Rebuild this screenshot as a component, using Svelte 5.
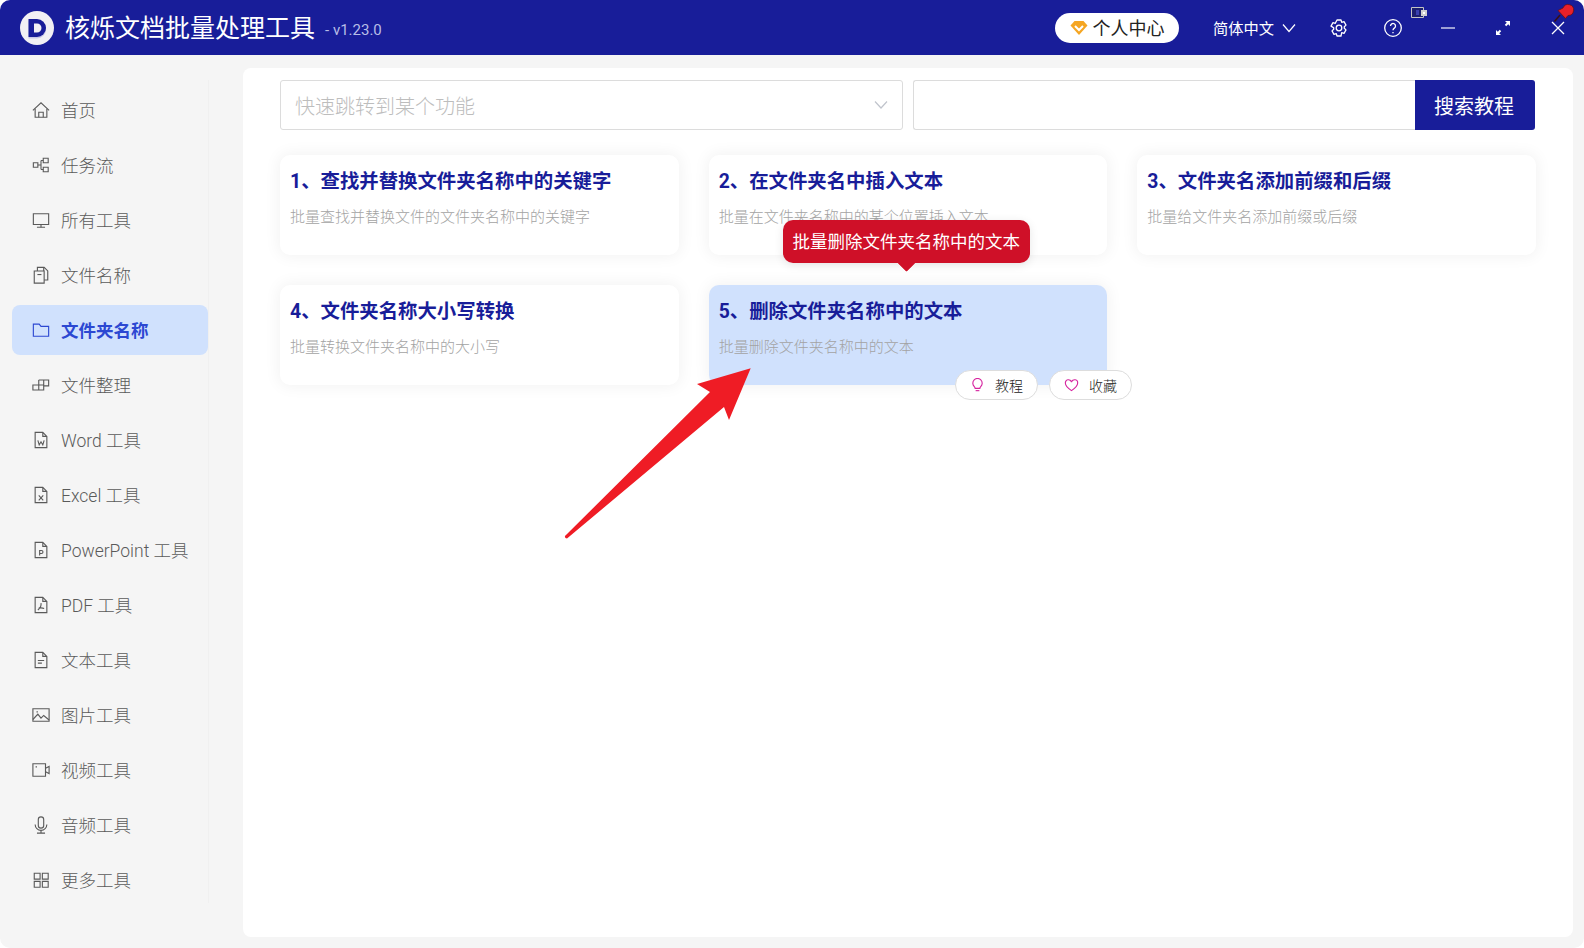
<script>
  // sidebar entries, icon is a list of stroked paths on a 20x20 box
  const doc = "M3.500 1.500h8.500l4.500 4.500v12.500h-13z M12 1.500V6h4.500";
  const navItems = [
    { label: "首页", icon: ["M1 10.500 10 2l9 8.500", "M3.500 8.500V18h13V8.500", "M7.500 18v-5.500h5V18"] },
    { label: "任务流", icon: ["M1.500 7.500h5v5h-5z", "M12.500 2.500h5.500v5h-5.500z", "M12.500 12.500h5.500v5h-5.500z", "M6.500 10h3.500M10 5v10M10 5h2.500M10 15h2.500"] },
    { label: "所有工具", icon: ["M1.500 3h17v12h-17z", "M10 15v3", "M5.500 18h9"] },
    { label: "文件名称", icon: ["M2.500 5.500h11v13.500h-11z", "M6 5.500V1.500h7.500l4 4V15.500h-4", "M13 1.500v4", "M6 9.500h4.500"] },
    { label: "文件夹名称", icon: ["M1.500 3.500h6.500l2 2.500h8.500v11h-17z"] },
    { label: "文件整理", icon: ["M7.500 4.500h11V11H13", "M13 4.500V15.500H1V10h12", "M7.500 4.500V15.500"] },
    { label: "Word 工具", icon: [doc, "M6.500 10.500l1.500 5 2-3.500 2 3.500 1.500-5"] },
    { label: "Excel 工具", icon: [doc, "M7.500 10.500l5 5.500M12.500 10.500l-5 5.500"] },
    { label: "PowerPoint 工具", icon: [doc, "M8.500 16v-5.500h2a1.700 1.700 0 0 1 0 3.400h-2"] },
    { label: "PDF 工具", icon: [doc, "M10 8c.500 3-1.500 6-3.500 7.500M7.500 13.500c2-.5 4-.5 6 .5"] },
    { label: "文本工具", icon: [doc, "M6.500 10.500h7M6.500 13.500h4.500"] },
    { label: "图片工具", icon: ["M1 3h18v14H1z", "M1 15l5.500-6 3.500 4.500 3-3 6 5", "M5 6.500h1.500"] },
    { label: "视频工具", icon: ["M1 3h14v14H1z", "M15 8l4-2v8l-4-2", "M4 6.500h1.500"] },
    { label: "音频工具", icon: ["M7 4a3 3 0 0 1 6 0v6.500a3 3 0 0 1-6 0z", "M3.500 9.500a6.500 6.500 0 0 0 13 0", "M10 16v3M5.500 19h9"] },
    { label: "更多工具", icon: ["M2.500 2.500H9V9H2.500z", "M11.500 2.500H18V9h-6.500z", "M2.500 11.500H9V18H2.500z", "M11.500 11.500H18V18h-6.500z"] },
  ];
  const activeNav = "文件夹名称";

  const cards = [
    { title: "1、查找并替换文件夹名称中的关键字", desc: "批量查找并替换文件的文件夹名称中的关键字" },
    { title: "2、在文件夹名中插入文本", desc: "批量在文件夹名称中的某个位置插入文本" },
    { title: "3、文件夹名添加前缀和后缀", desc: "批量给文件夹名添加前缀或后缀" },
    { title: "4、文件夹名称大小写转换", desc: "批量转换文件夹名称中的大小写" },
    { title: "5、删除文件夹名称中的文本", desc: "批量删除文件夹名称中的文本", hover: true },
  ];
</script>

<div class="window">
  <header>
    <div class="logo">
      <svg viewBox="0 0 34 34" width="34" height="34">
        <circle cx="17" cy="17" r="17" fill="#f1f0f4" />
        <path d="M8.500 8h8.500a9 9 0 0 1 0 18H8.500z" fill="#c9c8e6" transform="translate(0 1.500)" />
        <path d="M8.500 8h8.500a9 9 0 0 1 0 18H8.500z" fill="#181d99" />
        <path d="M14 12.500h3a4.500 4.500 0 0 1 0 9h-3z" fill="#f1f0f4" />
      </svg>
    </div>
    <span class="app-name">核烁文档批量处理工具</span>
    <span class="version">- v1.23.0</span>

    <div class="actions">
      <div class="user-pill">
        <svg viewBox="0 0 18 16" width="18" height="16">
          <path d="M4.500 1h9L17.500 5.500 9 15 .5 5.500z" fill="#f5a623" />
          <path d="M5 6l4 4 4-4" fill="none" stroke="#fff" stroke-width="2" />
        </svg>
        <span>个人中心</span>
      </div>
      <div class="lang">
        <span>简体中文</span>
        <svg viewBox="0 0 14 10" width="14" height="10"><path d="M1 1.500 7 8.500l6-7" fill="none" stroke="#fff" stroke-width="1.200" /></svg>
      </div>
      <svg class="gear" viewBox="0 0 20 20" width="20" height="20" fill="none" stroke="#fff" stroke-width="1.300">
        <path d="M8 2h4l.7 2.300 2.300-.6 2 3.400-1.700 1.700v1.400l1.700 1.700-2 3.400-2.300-.6L12 18H8l-.7-2.300-2.300.6-2-3.400 1.700-1.700V9.800L2 8.100l2-3.400 2.300.6z" stroke-linejoin="round" />
        <circle cx="10" cy="10" r="2.800" />
      </svg>
      <svg class="help" viewBox="0 0 20 20" width="20" height="20" fill="none" stroke="#fff" stroke-width="1.300">
        <circle cx="10" cy="10" r="8.300" />
        <path d="M7.500 8a2.500 2.500 0 1 1 3.800 2.100c-.9.6-1.300 1-1.300 2.100" />
        <path d="M10 14v1.200" />
      </svg>
      <svg class="win-btn min" viewBox="0 0 16 16" width="16" height="16"><path d="M1 8h14" stroke="#e6e6f4" stroke-width="1.300" /></svg>
      <svg class="win-btn max" viewBox="0 0 16 16" width="16" height="16" fill="#fff">
        <path d="M15 1v5l-1.800-1.800-2 2-1.400-1.400 2-2L10 1z" />
        <path d="M1 15v-5l1.800 1.800 2-2 1.400 1.400-2 2L6 15z" />
      </svg>
      <svg class="win-btn close" viewBox="0 0 16 16" width="16" height="16"><path d="M2 2l12 12M14 2 2 14" stroke="#fff" stroke-width="1.300" /></svg>
    </div>

    <svg class="tray" viewBox="0 0 16 12" width="16" height="12">
      <path d="M.5 .5h12v10H.5z" fill="#1c1f70" stroke="#c4c4c4" />
      <path d="M5 3h3v5H5z" fill="#3a40b0" />
      <path d="M10 3h6v6h-6z" fill="#cfcfcf" />
      <path d="M12 5h2v2h-2z" fill="#fff" />
    </svg>
    <svg class="pin" viewBox="0 0 22 22" width="22" height="22">
      <path d="M1.500 20.500 7 14" stroke="#3a1014" stroke-width="1.600" />
      <path d="M5 9.500l5-2.500a5.500 5.500 0 1 1 5 7.500l-2.500 3z" fill="#e8202a" stroke="#6a1015" stroke-width=".8" />
    </svg>
  </header>

  <div class="body">
    <aside>
      <nav>
        {#each navItems as item}
          <div class="nav-item" class:active={item.label === activeNav}>
            <svg viewBox="0 0 20 20" width="18" height="18" fill="none" stroke="currentColor" stroke-width="1.250">
              {#each item.icon as d}<path {d} />{/each}
            </svg>
            <span>{item.label}</span>
          </div>
        {/each}
      </nav>
    </aside>

    <main>
      <div class="search-row">
        <div class="select">
          <span>快速跳转到某个功能</span>
          <svg viewBox="0 0 14 10" width="14" height="10"><path d="M1 1.500 7 8l6-6.500" fill="none" stroke="#c0c4cc" stroke-width="1.200" /></svg>
        </div>
        <div class="search">
          <div class="search-input"></div>
          <div class="search-btn">搜索教程</div>
        </div>
      </div>

      <div class="grid">
        {#each cards as card}
          <div class="card" class:hover={card.hover}>
            <h3>{card.title}</h3>
            <p>{card.desc}</p>
            {#if card.hover}
              <div class="tooltip">批量删除文件夹名称中的文本</div>
              <div class="card-btns">
                <div class="pill-btn">
                  <svg viewBox="0 0 16 16" width="15" height="15" fill="none" stroke="#d6249f" stroke-width="1.200">
                    <path d="M5.500 11c0-1.500-2.500-2.500-2.500-5.500a5 5 0 0 1 10 0c0 3-2.500 4-2.500 5.500z" />
                    <path d="M6 13.500h4" />
                  </svg>
                  <span>教程</span>
                </div>
                <div class="pill-btn">
                  <svg viewBox="0 0 16 16" width="15" height="15" fill="none" stroke="#d6249f" stroke-width="1.200">
                    <path d="M8 13.500C4 10.500 1.500 8.500 1.500 5.800A3.300 3.300 0 0 1 8 4.500a3.300 3.300 0 0 1 6.500 1.300c0 2.700-2.500 4.700-6.500 7.700z" />
                  </svg>
                  <span>收藏</span>
                </div>
              </div>
            {/if}
          </div>
        {/each}
      </div>
    </main>
  </div>

  <!-- red annotation arrow drawn over the screenshot -->
  <svg class="arrow" viewBox="0 0 200 180" width="200" height="180">
    <path d="M190.700 3.300 137 19l13 8L5 171q-.5 2 2 2.500L164 42l5 13z" fill="#ef1c25" />
  </svg>
</div>

<style>
  :global(body) {
    margin: 0;
    background: #fff;
    font-family: Roboto, "Noto Sans CJK SC", sans-serif;
  }
  .window {
    position: relative;
    width: 1584px;
    height: 948px;
    display: flex;
    flex-direction: column;
    background: #f5f5f5;
    border-radius: 10px;
    overflow: hidden;
  }

  /* title bar */
  header {
    position: relative;
    height: 55px;
    flex-shrink: 0;
    display: flex;
    align-items: center;
    background: #181d99;
    padding-left: 20px;
    color: #fff;
  }
  .logo {
    width: 34px;
    height: 34px;
    margin-right: 11px;
    display: flex;
  }
  .app-name {
    font-size: 25px;
    line-height: 34px;
    padding-top: 2px;
  }
  .version {
    margin-left: 10px;
    font-size: 15px;
    color: #b7bde6;
    margin-top: 5px;
  }
  .actions {
    margin-left: auto;
    display: flex;
    align-items: center;
    height: 100%;
  }
  .user-pill {
    width: 124px;
    height: 30px;
    box-sizing: border-box;
    background: #fff;
    border-radius: 15px;
    display: flex;
    align-items: center;
    justify-content: center;
    gap: 5px;
    color: #222;
    font-size: 18px;
  }
  .user-pill span {
    margin-top: -2px;
  }
  .lang {
    display: flex;
    align-items: center;
    gap: 8px;
    margin-left: 34px;
    font-size: 15.250px;
  }
  .lang span {
    margin-top: -2px;
  }
  .gear { margin-left: 33px; }
  .help { margin-left: 34px; }
  .win-btn.min { margin-left: 37px; }
  .win-btn.max { margin-left: 39px; }
  .win-btn.close { margin-left: 39px; margin-right: 18px; }
  .tray {
    position: absolute;
    left: 1411px;
    top: 7px;
  }
  .pin {
    position: absolute;
    left: 1553px;
    top: 1px;
  }

  .body {
    flex: 1;
    display: flex;
    min-height: 0;
  }

  /* sidebar */
  aside {
    width: 243px;
    flex-shrink: 0;
    padding-top: 25px;
    box-sizing: border-box;
  }
  nav {
    width: 197px;
    margin-left: 12px;
    padding-top: 5px;
    border-right: 1px solid #f0f0f0;
    height: 823px;
    box-sizing: border-box;
    display: flex;
    flex-direction: column;
    gap: 5px;
  }
  .nav-item {
    width: 196px;
    height: 50px;
    flex-shrink: 0;
    display: flex;
    align-items: center;
    gap: 11px;
    padding-left: 20px;
    box-sizing: border-box;
    border-radius: 8px;
    font-size: 17.500px;
    font-weight: 300;
    color: #5a5a5a;
  }
  .nav-item span {
    margin-top: -2px;
  }
  .nav-item.active {
    background: #d0e1fd;
    color: #2c48d2;
    font-weight: 700;
  }

  /* main panel */
  main {
    flex: 1;
    background: #fff;
    margin: 13px 11px 11px 0;
    border-radius: 8px;
    padding: 12px 37px 0;
    min-width: 0;
  }
  .search-row {
    display: flex;
    gap: 10px;
    height: 50px;
    margin-right: 1px;
  }
  .select {
    flex: 0 0 623px;
    box-sizing: border-box;
    border: 1px solid #dcdcdc;
    border-radius: 3px;
    display: flex;
    align-items: center;
    justify-content: space-between;
    padding: 0 14px;
    font-size: 20px;
    font-weight: 300;
    color: #bdbdbd;
  }
  .search {
    flex: 1;
    display: flex;
  }
  .search-input {
    flex: 1;
    border: 1px solid #dcdcdc;
    border-right: 0;
    border-radius: 3px 0 0 3px;
  }
  .search-btn {
    width: 120px;
    padding-right: 2px;
    box-sizing: border-box;
    background: #181d99;
    color: #fff;
    font-size: 20px;
    display: flex;
    align-items: center;
    justify-content: center;
    border-radius: 0 3px 3px 0;
  }

  .grid {
    margin-top: 25px;
    display: grid;
    grid-template-columns: repeat(3, 1fr);
    gap: 30px;
  }
  .card {
    position: relative;
    height: 100px;
    box-sizing: border-box;
    padding: 13px 10px 0;
    background: #fff;
    border-radius: 10px;
    box-shadow: 0 0 15px 2px rgba(0, 0, 0, 0.05);
  }
  .card.hover {
    background: #d0e1fd;
  }
  h3 {
    margin: 0;
    font-size: 19.400px;
    line-height: 28px;
    font-weight: 700;
    color: #181d99;
  }
  p {
    margin: 10px 0 0;
    font-size: 15px;
    line-height: 22px;
    font-weight: 300;
    color: #a3a3a3;
  }
  .tooltip {
    position: absolute;
    left: 74px;
    top: -65px;
    width: 247px;
    height: 43px;
    box-sizing: border-box;
    padding-top: 1px;
    background: #cf1028;
    border-radius: 10px;
    color: #fff;
    font-size: 17.500px;
    line-height: 43px;
    text-align: center;
    box-shadow: 0 2px 10px rgba(0, 0, 0, 0.1);
  }
  .tooltip::after {
    content: "";
    position: absolute;
    left: 116px;
    bottom: -6px;
    width: 15px;
    height: 15px;
    background: #cf1028;
    transform: rotate(45deg);
    border-radius: 2px;
    clip-path: polygon(100% 0, 100% 100%, 0 100%);
  }
  .card-btns {
    position: absolute;
    left: 246px;
    top: 85px;
    display: flex;
    gap: 10.500px;
  }
  .pill-btn {
    width: 83.500px;
    height: 30px;
    box-sizing: border-box;
    background: #fff;
    border: 1px solid #ddd;
    border-radius: 15px;
    display: flex;
    align-items: center;
    justify-content: center;
    gap: 10px;
    font-size: 14px;
    font-weight: 300;
    color: #222;
  }

  .arrow {
    position: absolute;
    left: 560px;
    top: 365px;
    pointer-events: none;
  }
</style>
